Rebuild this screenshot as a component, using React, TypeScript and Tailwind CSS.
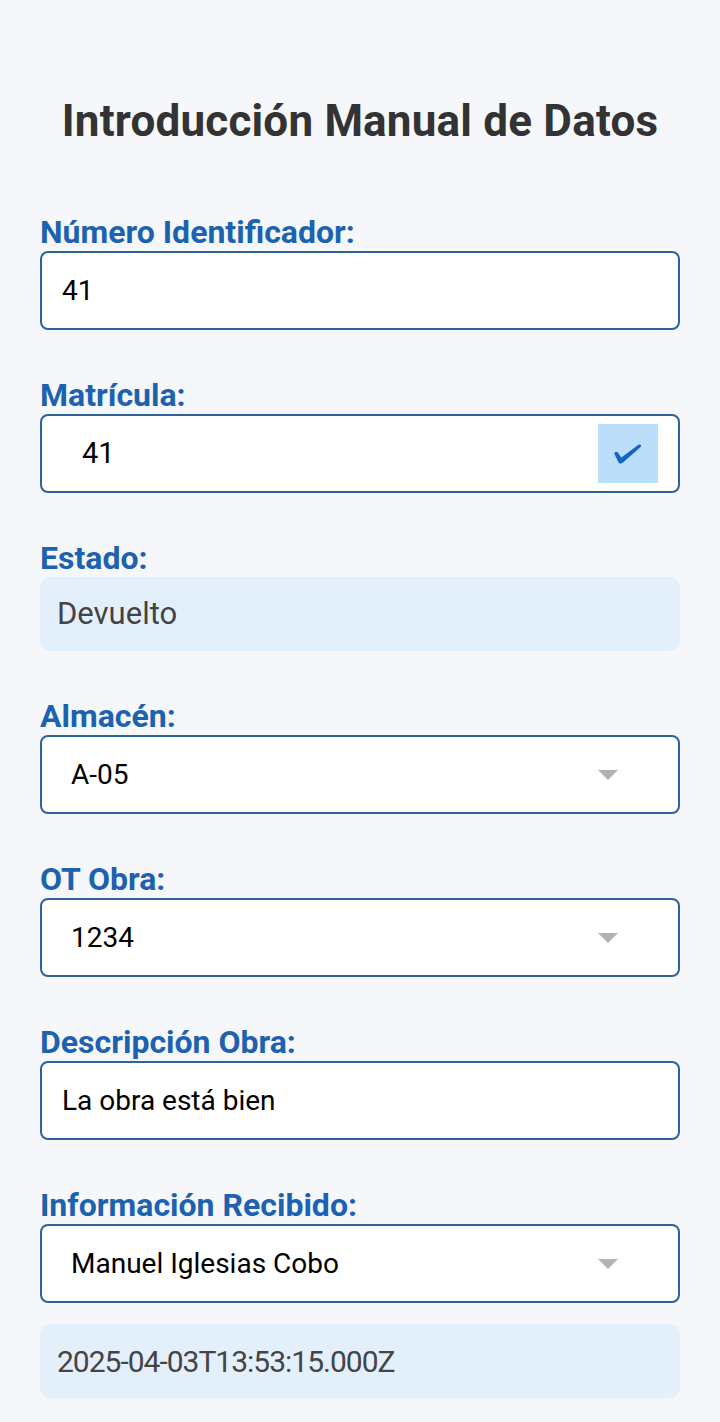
import { ReactNode } from 'react';

const labelCls = 'block text-[32px] leading-[38px] font-bold text-[#1c62b0]';
const boxCls = 'h-[79px] w-full rounded-[8px] border-2 border-[#2d6399] bg-white flex items-center';

const Label = ({ children }: { children: ReactNode }) => <label className={labelCls}>{children}</label>;

const Arrow = () => (
  <svg width="20" height="10" viewBox="0 0 20 10" className="shrink-0">
    <path d="M0 0 L20 0 L10 10 Z" fill="#b3b3b3" />
  </svg>
);

const Select = ({ value }: { value: string }) => (
  <div className={`${boxCls} pl-[29px] pr-[60px] justify-between`}>
    <span className="text-[28px] text-black">{value}</span>
    <Arrow />
  </div>
);

const Input = ({ value }: { value: string }) => (
  <div className={`${boxCls} pl-[20px]`}>
    <span className="text-[28px] text-black">{value}</span>
  </div>
);

const ReadOnly = ({ value, textCls }: { value: string; textCls: string }) => (
  <div className="h-[74px] w-full rounded-[10px] bg-[#e3f0fc] flex items-center pl-[17px]">
    <span className={`text-[#444] ${textCls}`}>{value}</span>
  </div>
);

export default function App() {
  return (
    <div className="min-h-[1422px] bg-[#f5f7fa] px-10 pt-[95px] font-['Roboto',sans-serif]">
      <h1 className="text-center text-[44px] leading-[52px] font-bold text-[#333] mb-[66px] tracking-[0.2px]">
        Introducción Manual de Datos
      </h1>

      <div className="flex flex-col gap-[46px]">
        <div>
          <Label>Número Identificador:</Label>
          <Input value="41" />
        </div>

        <div>
          <Label>Matrícula:</Label>
          <div className={`${boxCls} pl-[40px] pr-[20px] justify-between`}>
            <span className="text-[29px] text-black">41</span>
            <button className="w-[60px] h-[59px] bg-[#bbdefb]">
              <svg width="60" height="59" viewBox="0 0 60 59">
                <path
                  d="M16.5 30 C16 28 18.5 27 19.8 28.6 L23.3 33.6 L40.5 20.8 C42.3 19.6 44 21.4 42.6 23 L25 38.6 C23.4 40 21.4 39.8 20.4 38.2 Z"
                  fill="#1565c0"
                />
              </svg>
            </button>
          </div>
        </div>

        <div>
          <Label>Estado:</Label>
          <ReadOnly value="Devuelto" textCls="text-[31px]" />
        </div>

        <div>
          <Label>Almacén:</Label>
          <Select value="A-05" />
        </div>

        <div>
          <Label>OT Obra:</Label>
          <Select value="1234" />
        </div>

        <div>
          <Label>Descripción Obra:</Label>
          <Input value="La obra está bien" />
        </div>

        <div>
          <Label>Información Recibido:</Label>
          <Select value="Manuel Iglesias Cobo" />
          <div className="mt-[21px]">
            <ReadOnly value="2025-04-03T13:53:15.000Z" textCls="text-[30px] tracking-[-1px]" />
          </div>
        </div>
      </div>
    </div>
  );
}
